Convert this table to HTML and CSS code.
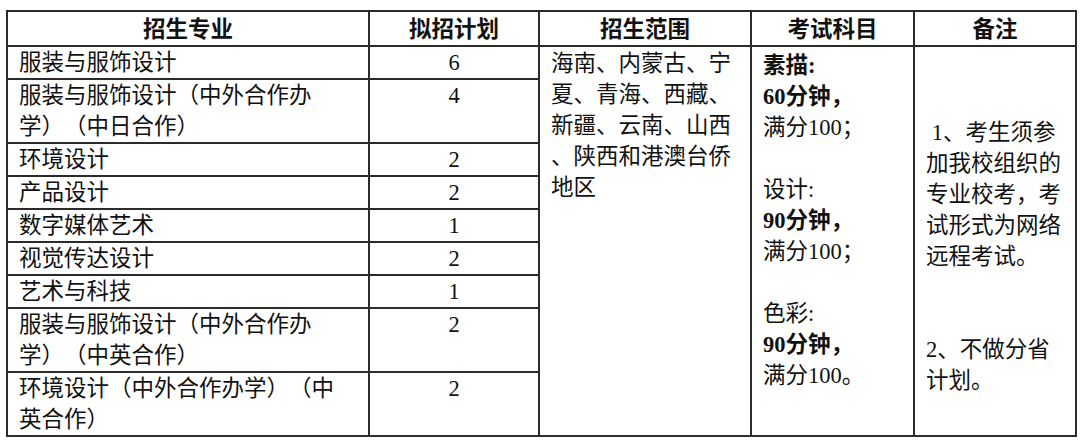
FILE: index.html
```html
<!DOCTYPE html>
<html lang="zh-CN">
<head>
<meta charset="utf-8">
<title>招生计划</title>
<link rel="stylesheet" href="styles.css">
</head>
<body>
<div class="page">
  <table class="plan">
    <colgroup>
      <col class="c-major">
      <col class="c-num">
      <col class="c-area">
      <col class="c-exam">
      <col class="c-note">
    </colgroup>
    <thead>
      <tr class="head">
        <th>招生专业</th>
        <th>拟招计划</th>
        <th>招生范围</th>
        <th>考试科目</th>
        <th>备注</th>
      </tr>
    </thead>
    <tbody>
      <tr>
        <td class="major">服装与服饰设计</td>
        <td class="num">6</td>
        <td class="area" rowspan="9">海南、内蒙古、宁<br>夏、青海、西藏、<br>新疆、云南、山西<br>、陕西和港澳台侨<br>地区</td>
        <td class="exam" rowspan="9"><b>素描:</b><br><b>60分钟，</b><br>满分100；<br><br>设计:<br><b>90分钟，</b><br>满分100；<br><br>色彩:<br><b>90分钟，</b><br>满分100。</td>
        <td class="note" rowspan="9">&nbsp;1、考生须参<br>加我校组织的<br>专业校考，考<br>试形式为网络<br>远程考试。<br><br><br>2、不做分省<br>计划。</td>
      </tr>
      <tr>
        <td class="major">服装与服饰设计（中外合作办<br>学）（中日合作）</td>
        <td class="num">4</td>
      </tr>
      <tr>
        <td class="major">环境设计</td>
        <td class="num">2</td>
      </tr>
      <tr>
        <td class="major">产品设计</td>
        <td class="num">2</td>
      </tr>
      <tr>
        <td class="major">数字媒体艺术</td>
        <td class="num">1</td>
      </tr>
      <tr>
        <td class="major">视觉传达设计</td>
        <td class="num">2</td>
      </tr>
      <tr>
        <td class="major">艺术与科技</td>
        <td class="num">1</td>
      </tr>
      <tr>
        <td class="major">服装与服饰设计（中外合作办<br>学）（中英合作）</td>
        <td class="num">2</td>
      </tr>
      <tr>
        <td class="major">环境设计（中外合作办学）（中<br>英合作）</td>
        <td class="num">2</td>
      </tr>
    </tbody>
  </table>
</div>
</body>
</html>
```
FILE: styles.css
```css
html, body {
  margin: 0;
  padding: 0;
  background: #ffffff;
}

.page {
  padding: 10px 0 0 6px;
}

.plan {
  border-collapse: collapse;
  table-layout: fixed;
  width: 1069px;
  font-family: "Liberation Serif", "Noto Sans CJK SC", serif;
  font-size: 22.5px;
  color: #111111;
  text-spacing-trim: space-all;
}

.c-major { width: 362px; }
.c-num { width: 170px; }
.c-area { width: 212px; }
.c-exam { width: 163px; }
.c-note { width: 162px; }

.plan th,
.plan td {
  border: 2px solid #2b2b2b;
  line-height: 31px;
  padding: 0 11px;
  vertical-align: top;
  text-align: left;
}

.plan th {
  font-weight: bold;
  text-align: center;
  padding: 2px 11px 0;
}

.plan td.num {
  text-align: center;
}

.plan td.area {
  padding-top: 1px;
}

.plan td.exam {
  padding-top: 3px;
}

.plan td.exam b {
  font-weight: bold;
}

.plan td.note {
  padding-top: 70px;
}
```
